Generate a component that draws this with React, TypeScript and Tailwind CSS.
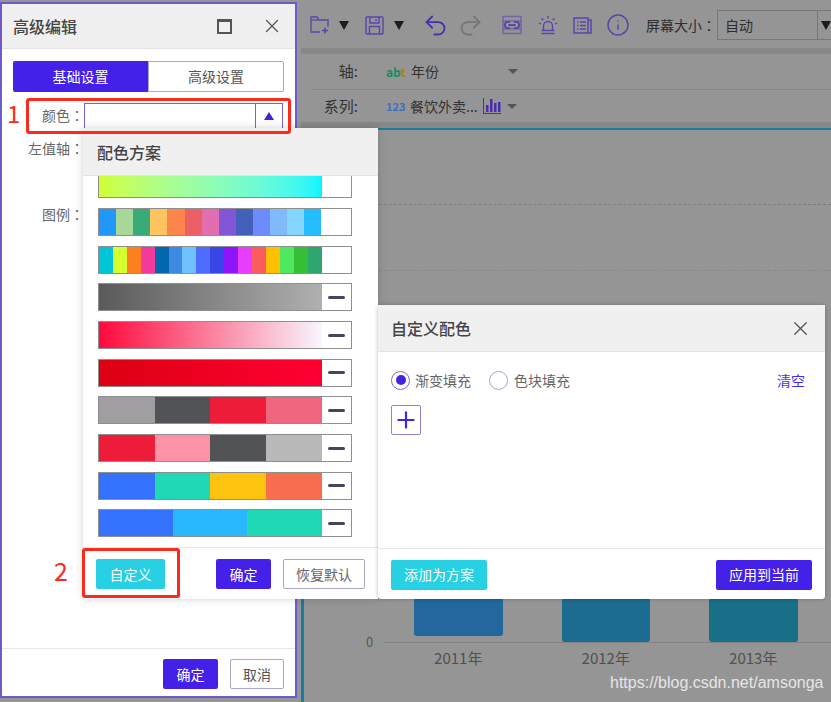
import React from 'react'
import { Undo2, Redo2, Info, X, Plus } from 'lucide-react'

const FONT = "font-['Noto_Sans_CJK_SC','Noto_Sans',sans-serif]"

interface Scheme {
  colors: string[]
  gradient?: boolean
  removable?: boolean
}

const SCHEMES: Scheme[] = [
  { colors: ['#2196fb', '#a8d79a', '#38ab79', '#fec45f', '#fe8549', '#ed5f66', '#e26db1', '#8356d8', '#4560b9', '#6c8cfd', '#7fbbfc', '#84d6fe', '#25bdfd'] },
  { colors: ['#00c4d8', '#d6ff2d', '#fe7f1f', '#f23a9c', '#0367ad', '#3e8ae3', '#6fc2fd', '#4e6cfd', '#3945e8', '#8e14fb', '#e73dfd', '#fd5c5f', '#fec000', '#4ee75e', '#34bf37', '#2fa570'] },
  { colors: ['#5a5a5a', '#b0b0b0'], gradient: true, removable: true },
  { colors: ['#ff0a3c', '#f7f6ff'], gradient: true, removable: true },
  { colors: ['#dc0012', '#ff0033'], gradient: true, removable: true },
  { colors: ['#a09ea1', '#515356', '#ed1c39', '#f0667e'], removable: true },
  { colors: ['#ed1c39', '#fe93a7', '#515356', '#b9b9b9'], removable: true },
  { colors: ['#3471fd', '#1fd8b6', '#fec30f', '#f76e4f'], removable: true },
  { colors: ['#3471fd', '#29b8fe', '#1fd8b6'], removable: true },
]

function Swatch({ scheme }: { scheme: Scheme }) {
  return (
    <div className="flex h-[28px] w-[254px] shrink-0 border-[1.5px] border-[#8e8e8e] bg-white">
      {scheme.gradient ? (
        <div
          className="h-full w-[222.5px]"
          style={{ background: `linear-gradient(to right, ${scheme.colors[0]}, ${scheme.colors[1]})` }}
        />
      ) : (
        <div className="flex h-full w-[222.5px]">
          {scheme.colors.map((c, i) => (
            <div key={i} className="h-full flex-1" style={{ background: c }} />
          ))}
        </div>
      )}
      <div className="flex flex-1 items-center justify-center">
        {scheme.removable && <div className="h-[3px] w-[17px] rounded-full bg-[#45455f]" />}
      </div>
    </div>
  )
}

function ToolbarCaret({ className = '' }: { className?: string }) {
  return <div className={`h-0 w-0 border-x-[5px] border-t-[9px] border-x-transparent border-t-[#1c1c1c] ${className}`} />
}

function SmallCaret() {
  return <div className="h-0 w-0 border-x-[5px] border-t-[5px] border-x-transparent border-t-[#555555]" />
}

// the traditional-chinese cut centres the full-width colon, like the original
function FieldLabel({ text }: { text: string }) {
  return (
    <span className="w-[82px] text-right">
      {text}
      <span className="font-['Noto_Sans_CJK_TC',sans-serif]">：</span>
    </span>
  )
}

function FolderAddIcon() {
  return (
    <svg width="20" height="20" viewBox="0 0 20 20" fill="none" stroke="#5b44ac" strokeWidth="1.3">
      <path d="M10 17H1V2h6l2 3h9v7" />
      <line x1="1" y1="5" x2="9" y2="5" />
      <path d="M15 12.5v6M12 15.5h6" strokeWidth="1.6" />
    </svg>
  )
}

function SaveIcon() {
  return (
    <svg width="19" height="19" viewBox="0 0 19 19" fill="none" stroke="#5b44ac" strokeWidth="1.4">
      <rect x="1" y="1" width="17" height="17" rx="1" />
      <path d="M5 1v6h9V1M11 3v2" />
      <path d="M4.5 18v-7.5h10V18" />
    </svg>
  )
}

function LinkIcon() {
  return (
    <svg width="20" height="20" viewBox="0 0 20 20" fill="none" stroke="#5b44ac" strokeWidth="1.4">
      <rect x="1" y="1.5" width="18" height="17" strokeOpacity="0.6" />
      <line x1="1" y1="6" x2="19" y2="6" strokeOpacity="0.6" />
      <line x1="1" y1="14" x2="19" y2="14" strokeOpacity="0.6" />
      <path d="M8 6.8H6a3.2 3.2 0 0 0 0 6.4h2M12 6.8h2a3.2 3.2 0 0 1 0 6.4h-2M6.5 10h7" strokeWidth="1.8" />
    </svg>
  )
}

function AlarmIcon() {
  return (
    <svg width="20" height="20" viewBox="0 0 20 20" fill="none" stroke="#5b44ac" strokeWidth="1.4">
      <path d="M5.5 15.5v-4.5a4.5 4.5 0 0 1 9 0v4.5M3.5 15.5h13M3.5 18.5h13" />
      <path d="M10 1v2.5M3.5 3.2l1.8 1.8M16.5 3.2l-1.8 1.8M1 8.5h2M17 8.5h2" />
    </svg>
  )
}

function ListIcon() {
  return (
    <svg width="19" height="19" viewBox="0 0 19 19" fill="none" stroke="#5b44ac" strokeWidth="1.5">
      <path d="M1 2h14v15H1zM15 4h3v13h-3" />
      <path d="M4 6h1.5M7 6h6M4 9.5h1.5M7 9.5h6M4 13h1.5M7 13h6" />
    </svg>
  )
}

function BarsIcon() {
  return (
    <svg width="18" height="16" viewBox="0 0 18 16" fill="#4a2db0">
      <rect x="3" y="7" width="2.5" height="7" />
      <rect x="7" y="1" width="2.5" height="13" />
      <rect x="11" y="5" width="2.5" height="9" />
      <rect x="15" y="4" width="2.5" height="10" />
      <rect x="0" y="0" width="1" height="16" />
      <rect x="0" y="15" width="18" height="1" />
    </svg>
  )
}

function Toolbar() {
  return (
    <div className="flex h-[48px] shrink-0 items-center pl-[9px] pt-[2px] text-[#2e2e2e] [&>*]:shrink-0">
      <FolderAddIcon />
      <ToolbarCaret className="ml-[9px]" />
      <div className="ml-[16px]"><SaveIcon /></div>
      <ToolbarCaret className="ml-[10px]" />
      <Undo2 size={27} strokeWidth={1.6} color="#4a2db0" className="ml-[17.5px]" />
      <Redo2 size={27} strokeWidth={1.6} color="#767676" className="ml-[8px]" />
      <div className="ml-[18.5px]"><LinkIcon /></div>
      <div className="ml-[16px]"><AlarmIcon /></div>
      <div className="ml-[15px]"><ListIcon /></div>
      <Info size={24} strokeWidth={1.5} color="#5b44ac" className="ml-[14px]" />
      <span className="ml-[16px] text-[14px] whitespace-nowrap">屏幕大小<span className="font-['Noto_Sans_CJK_TC',sans-serif]">：</span></span>
      <div className="ml-[1px] flex h-[30px] w-[125px] items-center border border-[#777777]">
        <span className="flex-1 pl-[7px] text-[14px]">自动</span>
        <div className="flex h-full w-[24px] items-center pl-[3px] border-l border-[#777777]">
          <ToolbarCaret />
        </div>
      </div>
    </div>
  )
}

function FieldRows() {
  return (
    <div className="relative shrink-0 text-[14px] text-[#333333]">
      <div className="ml-[12px] flex h-[36px] items-center border-b border-[#858585]">
        <span className="w-[45px] text-right text-[15px]">轴:</span>
        <span className="ml-[28px] w-[18px] text-[12px] font-bold leading-none">
          <span className="text-[#1f8a62]">ab</span><span className="text-[#a8801c]">t</span>
        </span>
        <span className="ml-[7px] w-[97px]">年份</span>
        <SmallCaret />
      </div>
      <div className="ml-[12px] flex h-[32px] items-center">
        <span className="w-[45px] text-right text-[15px] whitespace-nowrap">系列:</span>
        <span className="ml-[28px] w-[16px] text-[11px] font-bold text-[#3f6fc4]">123</span>
        <span className="ml-[8px] whitespace-nowrap">餐饮外卖...</span>
        <div className="ml-[5px]"><BarsIcon /></div>
        <div className="ml-[6px]"><SmallCaret /></div>
      </div>
    </div>
  )
}

function Chart() {
  const bars = [
    { label: '2011年', h: 'h-[38px]', color: 'bg-[#22689c]' },
    { label: '2012年', h: 'h-[44px]', color: 'bg-[#1c6c91]' },
    { label: '2013年', h: 'h-[44px]', color: 'bg-[#176f88]' },
  ]
  return (
    <div className="flex min-h-0 flex-1 flex-col border-l-[3px] border-t-2 border-[#1b7a9e]">
      <div className="mt-[74px] h-0 border-t border-dashed border-[#7e7e7e]" />
      <div className="mt-[65px] h-0 border-t border-dashed border-[#8a8a8a]" />
      <div className="flex-1" />
      <div className="flex items-end">
        <span className="mb-[-5px] ml-[62px] w-[12px] text-[13px] leading-none text-[#555555]">0</span>
        <div className="ml-[5px] flex flex-1 justify-start gap-[59px] border-b border-[#828282] pl-[31px]">
          {bars.map((b) => (
            <div key={b.label} className={`w-[88.5px] rounded-[3px] ${b.h} ${b.color}`} />
          ))}
        </div>
      </div>
      <div className="ml-[110px] mt-[4px] flex h-[55px] gap-[59px]">
        {bars.map((b) => (
          <span key={b.label} className="w-[88.5px] text-center text-[15px] text-[#505050]">{b.label}</span>
        ))}
      </div>
    </div>
  )
}

function SettingsPanel() {
  return (
    <div className="mt-[2px] flex h-[696px] w-[297px] shrink-0 flex-col border-2 border-[#6a5bcf] bg-white">
      <div className="flex h-[45px] shrink-0 items-center border-b border-[#e4e4e4] bg-[#f0f0f0] pl-[11px] pr-[12px]">
        <span className="flex-1 text-[16px] font-medium text-[#444444]">高级编辑</span>
        <div className="mr-[29px] h-[15px] w-[15px] border-2 border-t-[3px] border-[#555555]" />
        <X size={22} strokeWidth={1.4} color="#555555" />
      </div>
      <div className="ml-[11px] mt-[12px] flex h-[31px] w-[271px] shrink-0 text-[14px]">
        <div className="flex w-[135px] items-center justify-center rounded-l-[2px] bg-[#4520e8] text-white">基础设置</div>
        <div className="flex flex-1 items-center justify-center rounded-r-[2px] border border-[#aaa7c4] text-[#555555]">高级设置</div>
      </div>
      <div className="mt-[10px] flex h-[27px] shrink-0 items-center text-[14px] text-[#666666]">
        <FieldLabel text="颜色" />
        <div className="flex h-[26px] w-[199px] border-[1.5px] border-[#7462d8]">
          <div className="flex-1" />
          <div className="flex w-[27px] items-center justify-center border-l-[1.5px] border-[#7462d8]">
            <div className="h-0 w-0 border-x-[5px] border-b-[8px] border-x-transparent border-b-[#4520e8]" />
          </div>
        </div>
      </div>
      <div className="mt-[6px] flex h-[27px] shrink-0 items-center text-[14px] text-[#666666]">
        <FieldLabel text="左值轴" />
      </div>
      <div className="mt-[39px] flex h-[27px] shrink-0 items-center text-[14px] text-[#666666]">
        <FieldLabel text="图例" />
      </div>
      <div className="flex-1" />
      <div className="flex h-[48px] shrink-0 items-center justify-end gap-[12px] border-t border-[#e6e6e6] pr-[11px] pt-[3px] text-[14px]">
        <div className="flex h-[30px] w-[55px] items-center justify-center rounded-[2px] bg-[#4520e8] text-white">确定</div>
        <div className="flex h-[30px] w-[54px] items-center justify-center rounded-[2px] border border-[#a9a5c6] text-[#555555]">取消</div>
      </div>
    </div>
  )
}

function SchemePopup() {
  return (
    <div className="absolute left-[83px] top-[128px] flex h-[471px] w-[295px] flex-col bg-white shadow-[0_0_8px_rgba(0,0,0,0.18)]">
      <div className="flex h-[48px] shrink-0 items-center border-b border-[#e4e4e4] bg-[#f0f0f0] pl-[14px] text-[16px] font-medium text-[#444444]">配色方案</div>
      <div className="flex h-[372px] shrink-0 flex-col gap-[9.7px] overflow-hidden border-b border-[#e8e8e8] pl-[15px]">
        <div className="flex h-[22.3px] w-[254px] shrink-0 border-[1.5px] border-t-0 border-[#8e8e8e]">
          <div className="h-full w-[222.5px] bg-gradient-to-r from-[#d0ff30] to-[#00f6ff]" />
        </div>
        {SCHEMES.map((s, i) => <Swatch key={i} scheme={s} />)}
      </div>
      <div className="flex flex-1 items-center pl-[13px] pr-[13px] pt-[1px] text-[14px]">
        <div className="flex h-[30px] w-[69px] items-center justify-center rounded-[2px] bg-[#27d0e2] text-white">自定义</div>
        <div className="ml-[51px] flex h-[30px] w-[55px] items-center justify-center rounded-[2px] bg-[#4520e8] text-white">确定</div>
        <div className="ml-[12px] flex h-[30px] w-[82px] items-center justify-center rounded-[2px] border border-[#a9a5c6] text-[#666666]">恢复默认</div>
      </div>
    </div>
  )
}

function CustomDialog() {
  return (
    <div className="absolute left-[378px] top-[305px] flex h-[294px] w-[447px] flex-col rounded-[3px] bg-white shadow-[0_0_4px_rgba(0,0,0,0.25)]">
      <div className="flex h-[47px] shrink-0 items-center justify-between border-b border-[#e4e4e4] bg-[#f0f0f0] pl-[13px] pr-[13px]">
        <span className="text-[16px] font-medium text-[#444444]">自定义配色</span>
        <X size={23} strokeWidth={1.4} color="#555555" />
      </div>
      <div className="flex-1 pl-[13px] pr-[20px] pt-[18px]">
        <div className="flex h-[20px] items-center text-[14px] text-[#666666]">
          <div className="flex h-[19px] w-[19px] items-center justify-center rounded-full border border-[#7a69dc]">
            <div className="h-[10px] w-[10px] rounded-full bg-[#4520e8]" />
          </div>
          <span className="ml-[5px]">渐变填充</span>
          <div className="ml-[18px] h-[19px] w-[19px] rounded-full border border-[#a9a5c6]" />
          <span className="ml-[6px] flex-1">色块填充</span>
          <span className="text-[#4a2cf0]">清空</span>
        </div>
        <div className="mt-[15px] flex h-[30px] w-[30px] items-center justify-center rounded-[2px] border border-[#8f84d4]">
          <Plus size={26} strokeWidth={2} color="#4520e8" />
        </div>
      </div>
      <div className="flex h-[51px] shrink-0 items-center justify-between border-t border-[#e8e8e8] pl-[13px] pr-[13px] pt-[1px] text-[14px] text-white">
        <div className="flex h-[30px] w-[96px] items-center justify-center rounded-[2px] bg-[#27d0e2]">添加为方案</div>
        <div className="flex h-[30px] w-[96px] items-center justify-center rounded-[2px] bg-[#4520e8]">应用到当前</div>
      </div>
    </div>
  )
}

export default function App() {
  return (
    <div className={`relative flex h-[702px] w-[831px] overflow-hidden bg-[#959595] ${FONT}`}>
      <SettingsPanel />
      <div className="ml-[4px] flex min-w-0 flex-1 flex-col">
        <Toolbar />
        <div className="h-[6px] shrink-0 bg-[#888888]" />
        <FieldRows />
        <div className="h-[6px] shrink-0 bg-[#888888]" />
        <Chart />
      </div>
      <SchemePopup />
      <CustomDialog />
      {/* annotations on top of the screenshot */}
      <div className="absolute left-[26px] top-[98px] h-[36px] w-[265px] rounded-[3px] border-[3px] border-[#fb2a1c]" />
      <div className="absolute left-[82px] top-[548px] h-[50px] w-[98px] rounded-[3px] border-[3px] border-[#fb2a1c]" />
      <span className="absolute left-[7px] top-[98px] text-[24px] leading-[30px] text-[#fb2a1c]">1</span>
      <span className="absolute left-[54px] top-[555px] text-[25px] leading-[30px] text-[#fb2a1c]">2</span>
      <span className="absolute left-[610px] top-[673px] font-['Liberation_Sans',sans-serif] text-[16px] leading-[20px] text-[#e6e6e6]">https://blog.csdn.net/amsonga</span>
    </div>
  )
}
